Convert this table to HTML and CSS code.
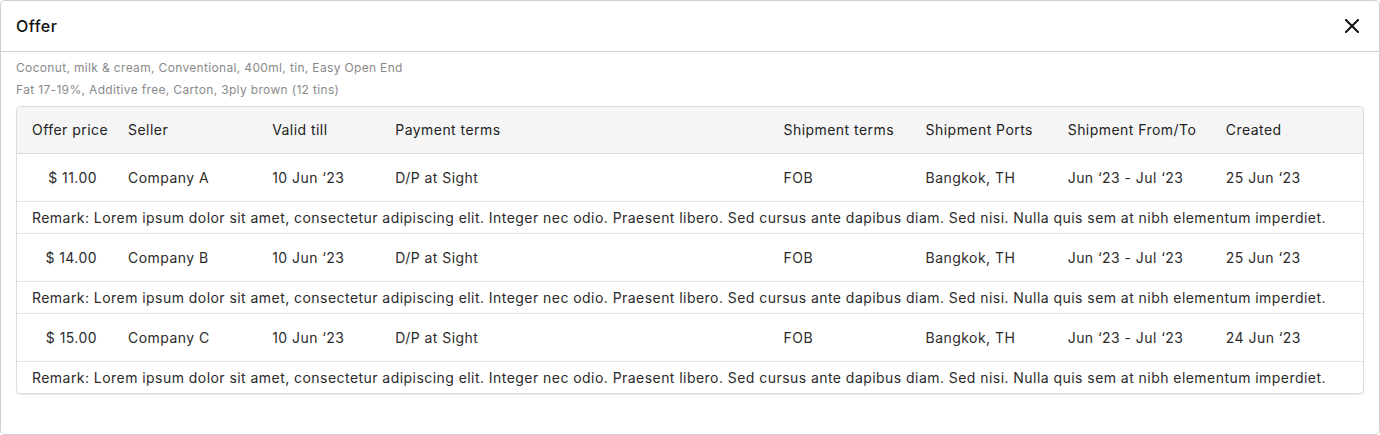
FILE: index.html
```html
<!DOCTYPE html>
<html>
<head>
<meta charset="utf-8">
<link rel="stylesheet" href="styles.css">
</head>
<body>
<div class="modal">
  <div class="modal-header">
    <div class="modal-title">Offer</div>
    <button class="close-btn" aria-label="Close">
      <svg width="14" height="14" viewBox="0 0 14 14"><path d="M1 1L13 13M13 1L1 13" stroke="#111" stroke-width="2" stroke-linecap="square" fill="none"/></svg>
    </button>
  </div>
  <div class="modal-body">
    <div class="desc">Coconut, milk &amp; cream, Conventional, 400ml, tin, Easy Open End</div>
    <div class="desc">Fat 17-19%, Additive free, Carton, 3ply brown (12 tins)</div>
    <div class="table-wrap">
      <table class="offers">
        <colgroup>
          <col class="c-price"><col class="c-seller"><col class="c-valid"><col class="c-pay"><col class="c-ship"><col class="c-ports"><col class="c-fromto"><col class="c-created">
        </colgroup>
        <thead>
          <tr>
            <th>Offer price</th><th>Seller</th><th>Valid till</th><th>Payment terms</th><th>Shipment terms</th><th>Shipment Ports</th><th>Shipment From/To</th><th>Created</th>
          </tr>
        </thead>
        <tbody>
          <tr class="data">
            <td class="price">$ 11.00</td><td>Company A</td><td>10 Jun ‘23</td><td>D/P at Sight</td><td>FOB</td><td>Bangkok, TH</td><td>Jun ‘23 - Jul ‘23</td><td>25 Jun ‘23</td>
          </tr>
          <tr class="remark"><td colspan="8">Remark: Lorem ipsum dolor sit amet, consectetur adipiscing elit. Integer nec odio. Praesent libero. Sed cursus ante dapibus diam. Sed nisi. Nulla quis sem at nibh elementum imperdiet.</td></tr>
          <tr class="data">
            <td class="price">$ 14.00</td><td>Company B</td><td>10 Jun ‘23</td><td>D/P at Sight</td><td>FOB</td><td>Bangkok, TH</td><td>Jun ‘23 - Jul ‘23</td><td>25 Jun ‘23</td>
          </tr>
          <tr class="remark"><td colspan="8">Remark: Lorem ipsum dolor sit amet, consectetur adipiscing elit. Integer nec odio. Praesent libero. Sed cursus ante dapibus diam. Sed nisi. Nulla quis sem at nibh elementum imperdiet.</td></tr>
          <tr class="data">
            <td class="price">$ 15.00</td><td>Company C</td><td>10 Jun ‘23</td><td>D/P at Sight</td><td>FOB</td><td>Bangkok, TH</td><td>Jun ‘23 - Jul ‘23</td><td>24 Jun ‘23</td>
          </tr>
          <tr class="remark last"><td colspan="8">Remark: Lorem ipsum dolor sit amet, consectetur adipiscing elit. Integer nec odio. Praesent libero. Sed cursus ante dapibus diam. Sed nisi. Nulla quis sem at nibh elementum imperdiet.</td></tr>
        </tbody>
      </table>
    </div>
  </div>
</div>
</body>
</html>
```
FILE: styles.css
```css
* { box-sizing: border-box; }
html, body { margin: 0; padding: 0; background: #fff; }
body {
  font-family: Inter, "Noto Sans", sans-serif;
  color: #2b2b2b;
  width: 1380px;
  height: 435px;
}
.modal {
  width: 1380px;
  height: 435px;
  border: 1px solid #cfcfcf;
  border-radius: 5px;
  background: #fff;
}
.modal-header {
  height: 51px;
  border-bottom: 1px solid #cfcfcf;
  display: flex;
  align-items: center;
  justify-content: space-between;
  padding: 0 20px 0 15px;
}
.modal-title {
  font-size: 16px;
  font-weight: 500;
  color: #111;
  letter-spacing: 0.5px;
}
.close-btn {
  border: 0;
  background: none;
  padding: 0;
  width: 14px;
  height: 14px;
  display: flex;
  cursor: pointer;
}
.modal-body {
  padding: 5px 15px 0;
}
.desc {
  font-size: 12px;
  line-height: 22px;
  color: #8a8a8a;
  letter-spacing: 0.34px;
}
.table-wrap {
  margin-top: 5px;
  border: 1px solid #dcdcdc;
  border-radius: 4px;
  overflow: hidden;
  box-shadow: 0 1px 1px rgba(0,0,0,0.08);
}
.offers {
  width: 100%;
  border-collapse: collapse;
  table-layout: fixed;
  font-size: 14px;
  letter-spacing: 0.45px;
}
.c-price { width: 96px; }
.c-seller { width: 144px; }
.c-valid { width: 123px; }
.c-pay { width: 388px; }
.c-ship { width: 142px; }
.c-ports { width: 142px; }
.c-fromto { width: 158px; }
.c-created { width: 152px; }
.offers th {
  background: #f5f5f5;
  font-weight: 400;
  text-align: left;
  height: 46px;
  padding: 0 0 0 15px;
  color: #222;
  border-bottom: 1px solid #dcdcdc;
  white-space: nowrap;
}
.offers td {
  padding: 0 0 0 15px;
  white-space: nowrap;
}
.offers tr.data td { height: 48px; }
.offers td.price { text-align: right; padding: 0 16px 0 0; }
.offers tr.data td { border-bottom: 1px solid #e3e3e3; }
.offers tr.remark td { height: 32px; border-bottom: 1px solid #e3e3e3; }
.offers tr.remark.last td { border-bottom: 0; }
```
